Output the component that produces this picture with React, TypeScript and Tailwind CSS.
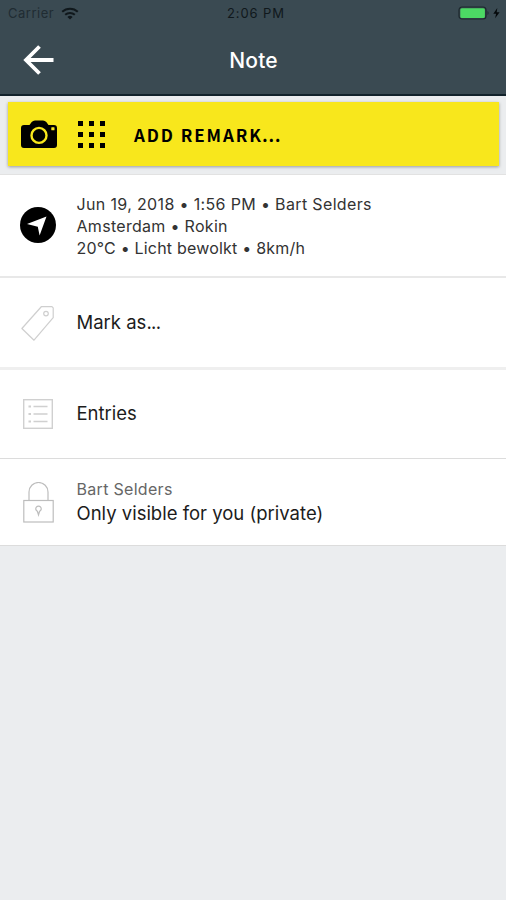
import type { ReactNode } from 'react';

const ArrowLeft = () => (
  <svg width="32" height="32" viewBox="0 0 32 32" fill="none" stroke="#fff" strokeWidth="3.8">
    <path d="M31.5 16H4M17.5 2.5L4 16l13.5 13.5" />
  </svg>
);

const Wifi = () => (
  <svg width="18" height="13" viewBox="0 0 18 13" fill="none" stroke="#10181c" strokeWidth="2">
    <path d="M1.2 4.8a11.2 11.2 0 0 1 15.6 0M4.2 7.8a7 7 0 0 1 9.6 0" />
    <path d="M9 12.6l-2.6-2.7a3.8 3.8 0 0 1 5.2 0z" fill="#10181c" stroke="none" />
  </svg>
);

const Battery = () => (
  <svg width="45" height="14" viewBox="0 0 45 14">
    <rect x="1" y="1" width="27" height="12" rx="3" fill="none" stroke="#1d282d" strokeWidth="1.2" />
    <rect x="2.3" y="2.3" width="24.6" height="9.6" rx="1.5" fill="#4cd964" />
    <path d="M29.5 5c1.4.5 1.4 3.5 0 4z" fill="#1d282d" />
    <path d="M39.3 2l-4 5.7h2.8l-1 4.5 4.5-6h-2.9z" fill="#05090b" />
  </svg>
);

const Camera = () => (
  <svg width="36" height="28" viewBox="0 0 36 28">
    <path
      d="M3 5h5.5l2.2-3Q12 .4 14 .4h8q2 0 3.3 1.6l2.2 3H33q3 0 3 3v17q0 3-3 3H3q-3 0-3-3V8q0-3 3-3z"
      fill="#000"
    />
    <circle cx="18" cy="15.4" r="7.5" fill="none" stroke="#f8e71c" strokeWidth="2.4" />
    <rect x="30.3" y="7.2" width="3.2" height="3" rx=".5" fill="#f8e71c" />
  </svg>
);

const Locate = () => (
  <svg width="36" height="36" viewBox="0 0 36 36">
    <circle cx="18" cy="18" r="18" fill="#000" />
    <path d="M26.5 9.5L19.6 28.5l-1.8-8.8L7 17z" fill="#fff" />
  </svg>
);

const Tag = () => (
  <svg width="34" height="36" viewBox="0 0 34 36" fill="none" stroke="#cfcfcf" strokeWidth="1.2">
    <path d="M20.5 1.5l10.5.2 1.2 1.2v9.8L13 35.2.9 23.5z" strokeLinejoin="round" />
    <circle cx="25" cy="8.6" r="2.3" />
  </svg>
);

const List = () => (
  <svg width="30" height="30" viewBox="0 0 30 30" fill="none" stroke="#d0d0d0">
    <rect x=".7" y=".7" width="28.6" height="28.6" strokeWidth="1.4" />
    <path d="M10.5 7.5h14M10.5 15h14M10.5 22.5h14" strokeWidth="1.3" />
    <path d="M5.5 7.5H8M5.5 15H8M5.5 22.5H8" strokeWidth="2" />
  </svg>
);

const Lock = () => (
  <svg width="31" height="41" viewBox="0 0 31 41" fill="none" stroke="#bdbdbd" strokeWidth="1.2">
    <path d="M6 18.5V10a9.5 9.5 0 0 1 19 0v8.5" />
    <rect x=".8" y="18.5" width="29.4" height="21.5" />
    <path d="M14.4 29.3a2.7 2.7 0 1 1 2.2 0L15.5 33z" />
  </svg>
);

const Row = ({ icon, className, children }: { icon: ReactNode; className: string; children: ReactNode }) => (
  <div className={`flex items-center bg-white ${className}`}>
    <div className="w-[76.5px] shrink-0 flex justify-center">{icon}</div>
    <div>{children}</div>
  </div>
);

const App = () => {
  return (
    <div className="w-[506px] h-[900px] overflow-hidden bg-[#ebedef] font-['Inter',sans-serif] text-[#1c1c1c]">
      <header className="h-[96px] bg-[#3a4a52] border-b-2 border-[#12222b]">
        <div className="h-[26px] grid grid-cols-3 items-center pl-2 text-[13px] text-[#10181c]">
          <div className="flex items-center gap-[7px]">
            <span className="pt-px tracking-[0.5px] text-[#202c32]">Carrier</span>
            <Wifi />
          </div>
          <span className="pt-px pr-[2px] text-center tracking-[0.9px]">2:06 PM</span>
          <div className="flex justify-end pr-[3px]">
            <Battery />
          </div>
        </div>
        <div className="h-[68px] grid grid-cols-3 items-center px-[22px]">
          <ArrowLeft />
          <h1 className="pt-[2px] pl-px text-center text-[21px] font-medium tracking-[0.2px] text-white">Note</h1>
        </div>
      </header>

      <div className="h-[79px] px-[8px] pt-[6px] border-b border-[#e2e2e2]">
        <button className="w-[491px] h-[64px] flex items-center bg-[#f8e71c] pl-[13px] shadow-[0_1px_3px_rgba(0,0,0,0.35)]">
          <Camera />
          <div className="ml-[21px] grid grid-cols-3 gap-[6px]">
            {Array.from({ length: 9 }, (_, i) => (
              <span key={i} className="size-[5px] bg-black" />
            ))}
          </div>
          <span className="ml-[29px] pt-px font-['Noto_Sans_CJK_SC',sans-serif] text-[17px] font-bold tracking-[1.9px] text-black">
            ADD REMARK<span className="-ml-px tracking-normal">…</span>
          </span>
        </button>
      </div>

      <Row icon={<Locate />} className="h-[103px] pb-px border-b-2 border-[#e8e8e8]">
        <div className="pt-px text-[16px] leading-[22px] tracking-[0.2px] text-[#333]">
          <p className="tracking-[0.35px]">Jun 19, 2018 • 1:56 PM • Bart Selders</p>
          <p className="tracking-[0.3px]">Amsterdam • Rokin</p>
          <p>20°C • Licht bewolkt • 8km/h</p>
        </div>
      </Row>
      <Row icon={<Tag />} className="h-[92px] border-b-3 border-[#efefef]">
        <p className="text-[18.5px]">
          Mark as<span className="tracking-[-0.7px]">...</span>
        </p>
      </Row>
      <Row icon={<List />} className="h-[89px] border-b border-[#dcdcdc]">
        <p className="text-[18.5px]">Entries</p>
      </Row>
      <Row icon={<Lock />} className="h-[87px] border-b border-[#dcdcdc]">
        <p className="-mt-[2px] text-[16px] leading-[24px] tracking-[0.3px] text-[#666]">Bart Selders</p>
        <p className="text-[18.5px] leading-[25px]">Only visible for you (private)</p>
      </Row>
    </div>
  );
};

export default App;
